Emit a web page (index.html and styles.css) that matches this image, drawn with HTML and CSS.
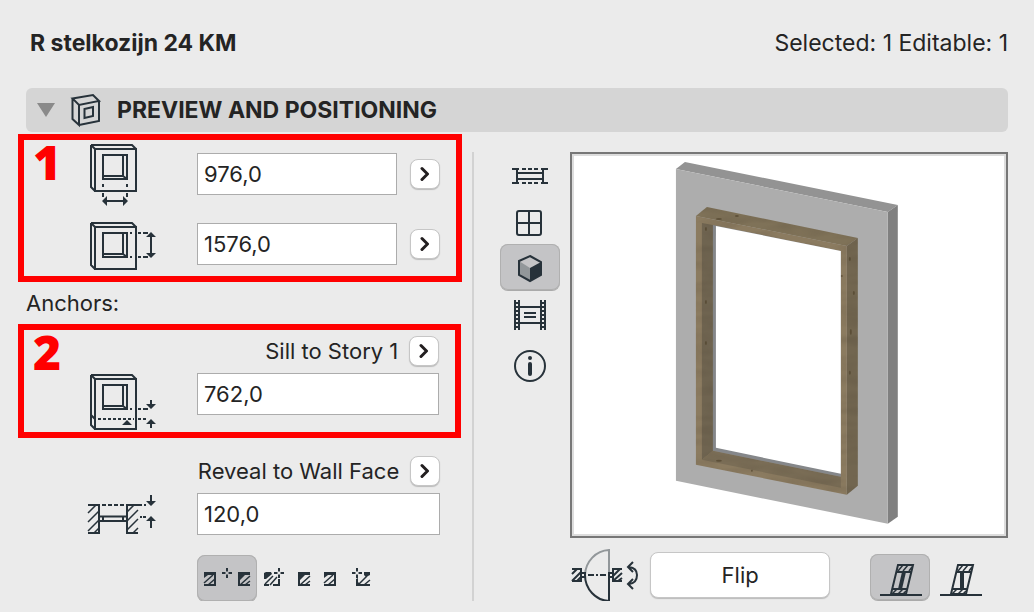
FILE: index.html
```html
<!DOCTYPE html>
<html lang="en">
<head>
  <meta charset="UTF-8" />
  <title>R stelkozijn 24 KM</title>
  <meta name="viewport" content="width=device-width, initial-scale=1.0"/>
  <link rel="stylesheet" href="styles.css">
</head>
<body>

<!-- shared icon parts -->
<svg class="defs" aria-hidden="true">
  <symbol id="chevron" viewBox="0 0 10 16">
    <path d="M2 2.5L7.5 8L2 13.5" fill="none" stroke="#231f20" stroke-width="3" stroke-linecap="round" stroke-linejoin="round"/>
  </symbol>
  <g id="opening">
    <path d="M13 12H37V36H13ZM33 12V33H13M33 33L37 36" />
  </g>
  <g id="block">
    <path d="M0 1H11V13H0" stroke-width="2"/>
    <path d="M0 0H12V3H4L0 6Z" class="solid"/>
    <path d="M0 11L9 3M4 13L11 7" stroke-width="1.500"/>
  </g>
  <g id="block-right">
    <path d="M12 1H1V13H12" stroke-width="2"/>
    <path d="M0 0H12V3H7L2 8H0Z" class="solid"/>
    <path d="M2 13L12 4M7 13L12 9" stroke-width="1.500"/>
  </g>
  <g id="plus">
    <path d="M0 -5V-1.500M0 1.500V5M-5 0H-1.500M1.500 0H5" stroke-width="2"/>
  </g>
</svg>

<header class="titlebar">
  <h1>R stelkozijn 24 KM</h1>
  <span>Selected: 1 Editable: 1</span>
</header>

<main class="dialog">
  <button class="section-head" type="button" aria-expanded="true">
    <svg width="18" height="14" viewBox="0 0 18 14"><path d="M0 0H18L9 14Z" fill="#8a8a8a"/></svg>
    <svg class="line" width="30" height="34" viewBox="0 0 30 34">
      <path d="M1.500 5.500L22 2L28 8L8 12ZM1.500 5.500V26L8 32V12M8 32L28 28V8"/>
      <path d="M13.500 16L22 14V23L13.500 25Z"/>
    </svg>
    <h2>PREVIEW AND POSITIONING</h2>
  </button>

  <div class="panels">
    <form class="settings">
      <section class="callout size">
        <b class="mark">1</b>
        <div class="field">
          <label class="icon" for="width" aria-label="Width">
            <svg class="line" width="70" height="66" viewBox="0 0 70 66">
              <path d="M1 2H42L46 6M5 6H46V48H5ZM1 2L5 6M1 2V44L5 48"/>
              <use href="#opening"/>
              <path d="M13 41V44M37 41V44M13 50V54M37 50V54M15 58H35"/>
              <path d="M12 58L17 53V63ZM38 58L33 53V63Z" class="solid"/>
            </svg>
          </label>
          <input type="text" id="width" value="976,0">
          <button class="pop" type="button" aria-label="Width options"><svg width="10" height="16"><use href="#chevron"/></svg></button>
        </div>
        <div class="field">
          <label class="icon" for="height" aria-label="Height">
            <svg class="line" width="70" height="48" viewBox="0 0 70 48">
              <path d="M1 1H42L46 5M5 5H46V47H5ZM1 1L5 5M1 1V43L5 47"/>
              <use href="#opening" y="-1"/>
              <path d="M40 11H42M48 11H51M53 11H58M40 35H42M48 35H51M53 35H58M61 13V33"/>
              <path d="M61 10L66 15H56ZM61 36L66 31H56Z" class="solid"/>
            </svg>
          </label>
          <input type="text" id="height" value="1576,0">
          <button class="pop" type="button" aria-label="Height options"><svg width="10" height="16"><use href="#chevron"/></svg></button>
        </div>
      </section>

      <p class="caption">Anchors:</p>

      <section class="callout anchor">
        <b class="mark">2</b>
        <div class="field-head">
          <label for="sill">Sill to Story 1</label>
          <button class="pop" type="button" aria-label="Sill anchor"><svg width="10" height="16"><use href="#chevron"/></svg></button>
        </div>
        <div class="field">
          <div class="icon top">
            <svg class="line" width="70" height="58" viewBox="0 0 70 58">
              <path d="M1 2H42L46 6M5 6H46V56H5ZM1 2L5 6M1 2V52L5 56M1 42L5 46"/>
              <use href="#opening"/>
              <path d="M40 36H42M48 36H51M53 36H58M61 27V33M61 49V55"/>
              <path d="M8 46H44M48 46H51M53 46H58" stroke-dasharray="3 2"/>
              <path d="M61 36L66 31H56ZM61 46L66 51H56ZM37 47L42 52H32Z" class="solid"/>
            </svg>
          </div>
          <input type="text" id="sill" value="762,0">
        </div>
      </section>

      <section class="anchor reveal">
        <div class="field-head">
          <label for="reveal">Reveal to Wall Face</label>
          <button class="pop" type="button" aria-label="Reveal anchor"><svg width="10" height="16"><use href="#chevron"/></svg></button>
        </div>
        <div class="field">
          <div class="icon top">
            <svg class="line" width="72" height="42" viewBox="-2 0 72 42">
              <path d="M-2 12H9V40H-2M48 12H37V40H48M9 23.500H37M9 28H37M13 23V28M33 23V28"/>
              <path d="M-2 20L6 12M-2 29L9 18M-2 38L9 27M4 40L9 35M37 19L44 12M37 28L48 17M37 37L48 26M43 40L48 35" stroke-width="1.500"/>
              <path d="M12 12H36M48 12H56" stroke-dasharray="4 2"/>
              <path d="M50 24H52M53 24H56M61 2V8M61 28V35"/>
              <path d="M61 13L66 8H56ZM61 23L66 28H56Z" class="solid"/>
            </svg>
          </div>
          <input type="text" id="reveal" value="120,0">
        </div>
        <div class="choices">
          <button class="tool active" type="button" aria-label="Center" aria-pressed="true">
            <svg class="line" width="46" height="20" viewBox="0 0 46 20">
              <use href="#block" y="4"/>
              <use href="#plus" x="23" y="5"/>
              <use href="#block-right" x="34" y="4"/>
            </svg>
          </button>
          <button class="tool" type="button" aria-label="Side 1">
            <svg class="line" width="20" height="20" viewBox="0 0 20 20">
              <path d="M0 5L2 4H7L8 6L2 11H0Z" class="solid"/>
              <path d="M0 17H5M15 11V17H9"/>
              <path d="M1 16L9 8M6 17L13 9" stroke-width="1.500"/>
              <use href="#plus" x="15" y="5"/>
            </svg>
          </button>
          <button class="tool" type="button" aria-label="Reveal 1">
            <svg class="line" width="12" height="20" viewBox="0 0 12 20">
              <use href="#block-right" y="4"/>
            </svg>
          </button>
          <button class="tool" type="button" aria-label="Reveal 2">
            <svg class="line" width="12" height="20" viewBox="0 0 12 20">
              <use href="#block" y="4"/>
            </svg>
          </button>
          <button class="tool" type="button" aria-label="Side 2">
            <svg class="line" width="20" height="20" viewBox="0 0 20 20">
              <use href="#plus" x="7" y="5"/>
              <path d="M7 11V17H20"/>
              <path d="M6 11L8 10V14L12 18H6ZM14 4H20V7L16 9L14 7Z" class="solid"/>
              <path d="M9 16L17 8M14 17L20 12" stroke-width="1.500"/>
            </svg>
          </button>
        </div>
      </section>
    </form>

    <div class="divider"></div>

    <section class="preview">
      <nav class="views" aria-label="Views">
        <button class="tool" type="button" aria-label="Plan view">
          <svg class="line" width="60" height="46" viewBox="0 0 60 46">
            <path d="M12 21H19M41 21H48M12 35H19M41 35H48M17 21V35M43 21V35M17 25H43M17 31H43"/>
            <path d="M22 21H39M22 35H39" stroke-dasharray="4 2"/>
          </svg>
        </button>
        <button class="tool" type="button" aria-label="Front view">
          <svg class="line" width="60" height="46" viewBox="0 0 60 46">
            <rect x="17" y="15" width="24" height="24" rx="2"/>
            <path d="M29 15V39M17 27H41"/>
          </svg>
        </button>
        <button class="tool active" type="button" aria-label="3D view" aria-pressed="true">
          <svg class="line" width="60" height="46" viewBox="0 0 60 46">
            <path d="M30 12L41 18L30 24L19 17Z" fill="#c4c4c6" stroke="none"/>
            <path d="M19 17L30 24V37L19 31Z" fill="#92979a" stroke="none"/>
            <path d="M30 24L41 18V31L30 37Z" class="solid"/>
            <path d="M30 12L41 18V31L30 37L19 31V17Z"/>
          </svg>
        </button>
        <button class="tool" type="button" aria-label="Animation">
          <svg class="line" width="60" height="46" viewBox="0 0 60 46">
            <path d="M15 8V38M19 8V38M41 8V38M45 8V38M19 15H41M19 31H41M24 21H36M24 25H36"/>
            <path d="M17 10V38M43 10V38" stroke-dasharray="2 2"/>
          </svg>
        </button>
        <button class="tool" type="button" aria-label="Info">
          <svg class="line" width="60" height="46" viewBox="0 0 60 46">
            <circle cx="30" cy="26" r="15"/>
            <circle cx="30" cy="18" r="2" class="solid" stroke="none"/>
            <path d="M30 24V34" stroke-width="4" stroke-linecap="round"/>
          </svg>
        </button>
      </nav>

      <div class="viewer">
        <div class="canvas">
          <svg viewBox="0 0 430 378" role="img" aria-label="3D preview of frame in wall">
            <defs>
              <filter id="grain" x="0" y="0" width="1" height="1" color-interpolation-filters="sRGB">
                <feTurbulence type="fractalNoise" baseFrequency="0.03 0.1" numOctaves="2" seed="4"/>
                <feColorMatrix values="0 0 0 0 0.3  0 0 0 0 0.26  0 0 0 0 0.2  0.4 0 0 0 -0.160"/>
                <feComposite in2="SourceGraphic" operator="in" result="n"/>
                <feMerge><feMergeNode in="SourceGraphic"/><feMergeNode in="n"/></feMerge>
              </filter>
            </defs>
            <!-- wall -->
            <path d="M102 13L111 6L324 49L314 56Z" fill="#939393"/>
            <path d="M314 56L324 49V361L314 368Z" fill="#808080"/>
            <path d="M102 13L314 56V368L102 325Z" fill="#adadad"/>
            <!-- frame -->
            <g filter="url(#grain)">
              <path d="M122 60L133 51L284 82L273 90Z" fill="#7f7258"/>
              <path d="M273 90L284 82V330L273 339Z" fill="#726650"/>
              <path d="M122 60L273 90V339L122 309Z" fill="#8b7b60"/>
              <path d="M128 67L139 69V295L128 304Z" fill="#6f6450"/>
              <path d="M128 304L139 295L267 321V332Z" fill="#7a6d56"/>
            </g>
            <path d="M139 69L267 95V321L139 295Z" fill="#85878a"/>
            <path d="M142 70L267 95V318L142 292Z" fill="#fff"/>
            <!-- knots -->
            <g fill="#4c3f28" opacity="0.6">
              <ellipse cx="145" cy="63" rx="3" ry="1"/>
              <ellipse cx="163" cy="60" rx="2" ry="1"/>
              <ellipse cx="268" cy="120" rx="1" ry="1"/>
              <ellipse cx="132" cy="73" rx="1" ry="2"/>
              <ellipse cx="132" cy="146" rx="1" ry="2"/>
              <ellipse cx="132" cy="187" rx="1" ry="2"/>
              <ellipse cx="276" cy="103" rx="1" ry="2"/>
              <ellipse cx="280" cy="137" rx="1" ry="2"/>
              <ellipse cx="277" cy="176" rx="1" ry="3"/>
              <ellipse cx="276" cy="217" rx="1" ry="2"/>
              <ellipse cx="145" cy="305" rx="3" ry="1"/>
              <ellipse cx="178" cy="315" rx="1" ry="1"/>
            </g>
          </svg>
        </div>

        <div class="actions">
          <svg class="line swing" width="70" height="56" viewBox="0 0 70 56">
            <path d="M15 28A25 26 0 0 1 39 3V28" stroke="#92979a"/>
            <path d="M15 28A25 26 0 0 0 39 54V28"/>
            <path d="M2 22H11V34H2M52 22H43V34H52M11 26H15V30H11ZM39 26H43V30H39ZM18 28H24M26 28H28M30 28H36"/>
            <path d="M2 27L7 22M2 34L11 25M7 34L11 30M43 29L50 22M43 34L52 26M48 34L52 31"/>
            <path d="M59 20Q67 21 67 28Q67 36 59 37M63 15L58 20L63 25M63 32L58 37L63 42"/>
          </svg>
          <button class="flip" type="button">Flip</button>
          <div class="slants">
            <button class="tool active" type="button" aria-label="Slanted" aria-pressed="true">
              <svg class="line" width="44" height="40" viewBox="0 0 44 40">
                <path d="M2 38H44M20 8H35L28 37H13ZM18 15H33M15 32H29"/>
                <path d="M20 14L25 8M25 14L30 8M31 14L34 10M14 37L19 32M20 37L25 32M25 37L28 34" stroke-width="1.500"/>
                <path d="M24 15H28L24 32H20Z" class="solid"/>
              </svg>
            </button>
            <button class="tool" type="button" aria-label="Vertical">
              <svg class="line" width="44" height="40" viewBox="0 0 44 40">
                <path d="M2 38H44M20 8H35L28 37H13ZM18 15H33M15 32H29"/>
                <path d="M20 14L25 8M25 14L30 8M31 14L34 10M14 37L19 32M20 37L25 32M25 37L28 34" stroke-width="1.500"/>
                <path d="M24 15V32" stroke-width="4"/>
              </svg>
            </button>
          </div>
        </div>
      </div>
    </section>
  </div>
</main>

</body>
</html>
```
FILE: styles.css
```css
* {
  box-sizing: border-box;
}
body {
  margin: 0;
  background-color: #ebebeb;
  color: #242424;
  font-family: Inter, "Liberation Sans", sans-serif;
  font-size: 22px;
  line-height: 30px;
}
h1, h2, p {
  margin: 0;
}
h1, h2, .titlebar {
  font-size: 23px;
}
button, input {
  font: inherit;
  color: inherit;
}
button {
  padding: 0;
  border: none;
  background: none;
}
svg {
  display: block;
  flex: none;
}
.defs {
  position: absolute;
  width: 0;
  height: 0;
}
.line, .defs g {
  fill: none;
}
.line {
  stroke: #27323a;
  stroke-width: 2;
  overflow: visible;
}
.solid {
  fill: #27323a;
  stroke: none;
}
.titlebar {
  display: flex;
  justify-content: space-between;
  align-items: center;
  height: 88px;
  padding: 0 26px 2px 30px;
}
.dialog {
  padding: 0 26px 0 18px;
}
.section-head {
  display: flex;
  align-items: center;
  width: calc(100% - 8px);
  height: 44px;
  margin-left: 8px;
  padding: 0 11px;
  gap: 16px;
  border-radius: 6px;
  background-color: #d5d5d5;
}
.panels {
  display: grid;
  grid-template-columns: minmax(0, 7fr) auto minmax(0, 8fr);
}
.divider {
  width: 2px;
  margin: 20px 26px 0 10px;
  background-color: #d2d2d2;
}

/* left side */
.settings {
  padding-top: 2px;
}
.callout {
  position: relative;
  border: 6px solid #f00;
}
.mark {
  position: absolute;
  left: 9px;
  top: -2px;
  color: #f00;
  font-family: "Open Sans", Inter, sans-serif;
  font-size: 48px;
  font-weight: 800;
  line-height: 48px;
}
.size {
  padding: 13px 16px 11px 64px;
}
.anchor {
  padding: 6px 16px 17px 64px;
}
.callout.anchor {
  margin-right: 1px;
}
.field {
  display: flex;
  align-items: center;
  height: 42px;
}
.field + .field {
  margin-top: 28px;
}
.icon {
  display: flex;
  flex: none;
  align-items: center;
  width: 109px;
  height: 42px;
  padding-left: 2px;
}
.size .icon {
  padding-top: 4px;
}
.icon.top {
  align-items: flex-start;
}
.field input {
  flex: 1;
  width: 100%;
  min-width: 0;
  height: 42px;
  padding: 0 6px;
  border: 1px solid #acacac;
  background-color: #fff;
}
.pop {
  display: flex;
  flex: none;
  align-items: center;
  justify-content: center;
  width: 30px;
  height: 30px;
  border: 1px solid #c6c6c6;
  border-radius: 8px;
  background-color: #fff;
  box-shadow: 0 1px 1px #bbb;
}
.size .pop {
  margin-left: 13px;
}
.field-head {
  display: flex;
  align-items: center;
  justify-content: flex-end;
  gap: 11px;
  margin-bottom: 7px;
}
.caption {
  padding: 0 8px;
  line-height: 42px;
}
.reveal {
  padding: 18px 22px 0 70px;
}
.reveal .icon {
  padding-left: 0;
}
.choices {
  display: flex;
  height: 46px;
  margin: 20px 0 0 109px;
}
.choices .tool {
  padding: 0 7px;
}
.tool {
  display: flex;
  align-items: center;
  justify-content: center;
  height: 46px;
  border-radius: 8px;
}
.tool.active {
  background-color: #c4c4c6;
  box-shadow: inset 0 0 0 1px #b0b0b0, 0 1px 0 #aaa;
}

/* right side */
.preview {
  display: flex;
  gap: 10px;
}
.views {
  display: flex;
  flex-direction: column;
  gap: 2px;
  padding-top: 16px;
}
.viewer {
  flex: 1;
  min-width: 0;
  padding-top: 20px;
}
.canvas {
  border: 2px solid #777;
  padding: 2px;
  background-color: #ddd;
}
.canvas svg {
  width: 100%;
  height: auto;
  background-color: #fff;
}
.actions {
  display: flex;
  gap: 10px;
  height: 48px;
  margin-top: 14px;
  padding-right: 18px;
}
.swing {
  margin-top: -5px;
}
.flip {
  flex: 1;
  height: 46px;
  border: 1px solid #c6c6c6;
  border-radius: 8px;
  background-color: #fff;
  box-shadow: 0 1px 1px #bbb;
}
.slants {
  display: flex;
  align-items: flex-end;
  margin-left: 30px;
}
.slants .tool {
  width: 60px;
}
```
